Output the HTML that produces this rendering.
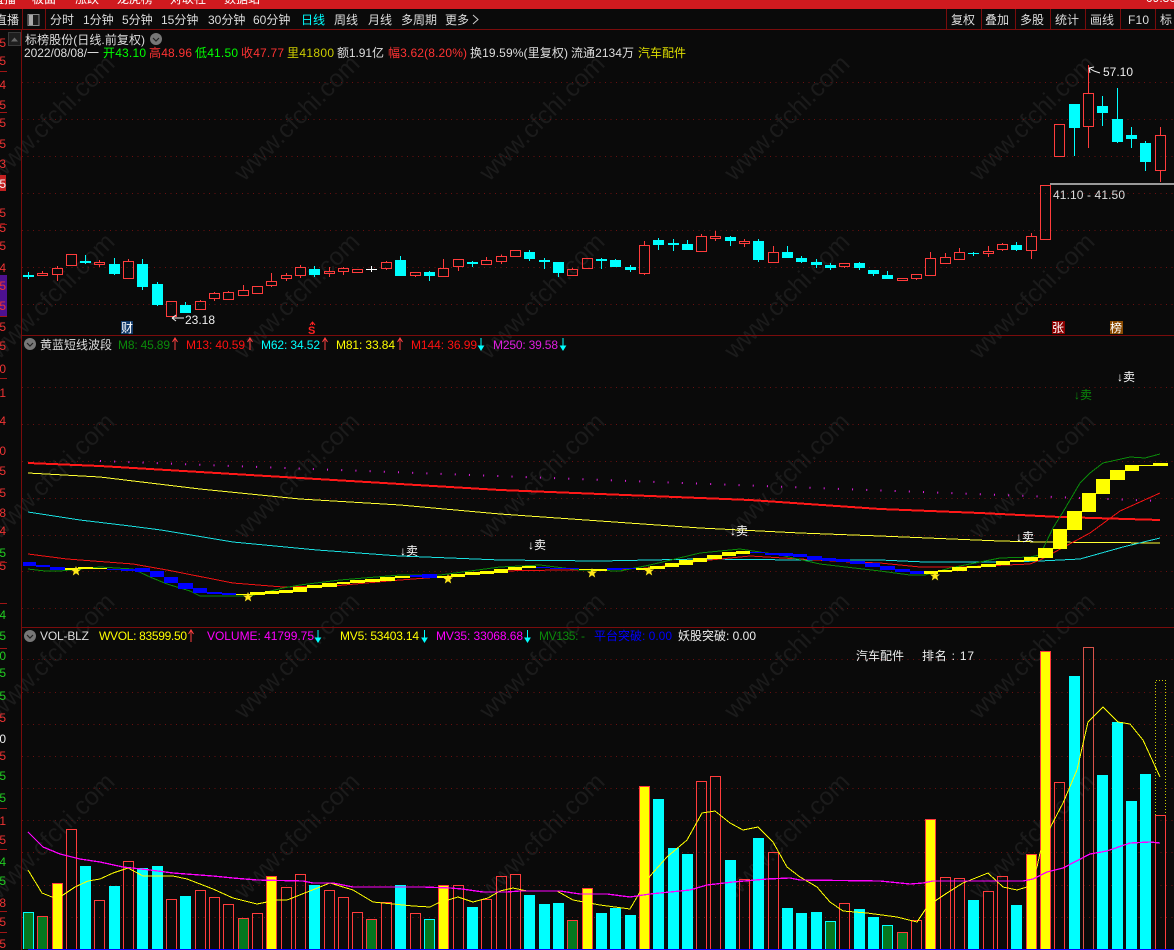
<!DOCTYPE html>
<html><head><meta charset="utf-8"><title>K线图</title>
<style>
html,body{margin:0;padding:0;background:#0a0a0a;width:1174px;height:950px;overflow:hidden}
svg{display:block;position:absolute;left:0;top:0}
text{font-family:"Liberation Sans","WenQuanYi Zen Hei","Noto Sans CJK SC",sans-serif;font-size:12px;fill:#ddd}
.wm text{font-size:25px;fill:#1b1b1b;text-anchor:middle;font-family:"Liberation Sans",sans-serif}
.ax text{text-anchor:end;fill:#e33}
.g{fill:#2c2}
.c{shape-rendering:crispEdges}
</style></head><body>
<svg width="1174" height="950" viewBox="0 0 1174 950" xmlns="http://www.w3.org/2000/svg">
<rect width="1174" height="950" fill="#0a0a0a"/>
<g class="wm">
<text transform="rotate(-45 52 118)" x="52" y="126">www.cfchi.com</text><text transform="rotate(-45 297 118)" x="297" y="126">www.cfchi.com</text><text transform="rotate(-45 542 118)" x="542" y="126">www.cfchi.com</text><text transform="rotate(-45 787 118)" x="787" y="126">www.cfchi.com</text><text transform="rotate(-45 1032 118)" x="1032" y="126">www.cfchi.com</text>
<text transform="rotate(-45 52 296)" x="52" y="304">www.cfchi.com</text><text transform="rotate(-45 297 296)" x="297" y="304">www.cfchi.com</text><text transform="rotate(-45 542 296)" x="542" y="304">www.cfchi.com</text><text transform="rotate(-45 787 296)" x="787" y="304">www.cfchi.com</text><text transform="rotate(-45 1032 296)" x="1032" y="304">www.cfchi.com</text>
<text transform="rotate(-45 52 476)" x="52" y="484">www.cfchi.com</text><text transform="rotate(-45 297 476)" x="297" y="484">www.cfchi.com</text><text transform="rotate(-45 542 476)" x="542" y="484">www.cfchi.com</text><text transform="rotate(-45 787 476)" x="787" y="484">www.cfchi.com</text><text transform="rotate(-45 1032 476)" x="1032" y="484">www.cfchi.com</text>
<text transform="rotate(-45 52 656)" x="52" y="664">www.cfchi.com</text><text transform="rotate(-45 297 656)" x="297" y="664">www.cfchi.com</text><text transform="rotate(-45 542 656)" x="542" y="664">www.cfchi.com</text><text transform="rotate(-45 787 656)" x="787" y="664">www.cfchi.com</text><text transform="rotate(-45 1032 656)" x="1032" y="664">www.cfchi.com</text>
<text transform="rotate(-45 52 836)" x="52" y="844">www.cfchi.com</text><text transform="rotate(-45 297 836)" x="297" y="844">www.cfchi.com</text><text transform="rotate(-45 542 836)" x="542" y="844">www.cfchi.com</text><text transform="rotate(-45 787 836)" x="787" y="844">www.cfchi.com</text><text transform="rotate(-45 1032 836)" x="1032" y="844">www.cfchi.com</text>
</g>

<!-- grid -->
<path class="c" fill="none" stroke="#6a1010" stroke-dasharray="1 4.5" d="M22 82.5H1174M22 119.5H1174M22 156.5H1174M22 193.5H1174M22 230.5H1174M22 267.5H1174M22 304.5H1174M22 387.5H1174M22 424.5H1174M22 461.5H1174M22 498.5H1174M22 535.5H1174M22 571.5H1174M22 608.5H1174M22 659.5H1174M22 692.5H1174M22 724.5H1174M22 756.5H1174M22 788.5H1174M22 820.5H1174M22 852.5H1174M22 885.5H1174M22 917.5H1174"/>

<!-- top bar -->
<rect x="0" y="0" width="1174" height="9" fill="#d01a1f"/>
<g>
<text x="-8" y="3" style="fill:#fff">直播</text><text x="32" y="3" style="fill:#fff">板面</text><text x="75" y="3" style="fill:#fff">涨跌</text><text x="117" y="3" style="fill:#fff">龙虎榜</text><text x="170" y="3" style="fill:#fff">对联社</text><text x="224" y="3" style="fill:#fff">数据站</text>
<text x="1146" y="2" style="fill:#fff">09:30</text>
</g>

<!-- toolbar -->
<path class="c" stroke="#7a0c0c" fill="none" d="M0 29.5H1174M22.5 9V29M45.5 9V29M946.5 9V29M981.5 9V29M1015.5 9V29M1050.5 9V29M1085.5 9V29M1120.5 9V29M1155.5 9V29M21.5 29V950M22 335.5H1174M22 627.5H1174"/>
<text x="-5" y="24" style="fill:#ddd">直播</text>
<rect x="28" y="14.5" width="11" height="11" fill="#1c1c1c" stroke="#888" class="c"/><rect x="29" y="15" width="4" height="10" fill="#aaa" class="c"/>
<g style="fill:#ccc">
<text x="50" y="24">分时</text>
<text x="83" y="24">1分钟</text>
<text x="122" y="24">5分钟</text>
<text x="161" y="24">15分钟</text>
<text x="208" y="24">30分钟</text>
<text x="253" y="24">60分钟</text>
<text x="301" y="24" style="fill:#0ff">日线</text>
<text x="334" y="24">周线</text>
<text x="368" y="24">月线</text>
<text x="401" y="24">多周期</text>
<text x="445" y="24">更多</text>
<text x="951" y="24">复权</text>
<text x="985" y="24">叠加</text>
<text x="1020" y="24">多股</text>
<text x="1055" y="24">统计</text>
<text x="1090" y="24">画线</text>
<text x="1128" y="24" textLength="21">F10</text>
<text x="1160" y="24">标</text>
</g>
<path d="M473 15l5 4.5-5 4.5" fill="none" stroke="#ccc"/>

<!-- left axis -->
<g class="ax">
<text x="6" y="47">5</text><text x="6" y="65">5</text><text x="6" y="89">4</text><text x="6" y="109">5</text><text x="6" y="127">5</text><text x="6" y="148">5</text><text x="6" y="168">3</text>
<rect x="0" y="175" width="6" height="16" fill="#c42020"/><text x="6" y="188" style="fill:#eee">5</text>
<text x="6" y="217">5</text><text x="6" y="232">5</text><text x="6" y="250">5</text><text x="6" y="272">4</text>
<rect x="0" y="275" width="7" height="41" fill="#4d1190"/><text x="6" y="290">5</text><text x="6" y="310">5</text>
<text x="6" y="331">5</text><text x="6" y="350">5</text><text x="6" y="373">0</text><text x="6" y="397">1</text><text x="6" y="425">4</text><text x="6" y="455">0</text><text x="6" y="475">5</text><text x="6" y="497">5</text><text x="6" y="517">8</text><text x="6" y="535">4</text>
<text x="6" y="557" style="fill:#2c2">5</text><text x="6" y="570">5</text>
<text x="6" y="619" style="fill:#2c2">4</text><text x="6" y="640" style="fill:#2c2">5</text><text x="6" y="660" style="fill:#2c2">0</text><text x="6" y="677" style="fill:#2c2">5</text><text x="6" y="700" style="fill:#2c2">5</text><text x="6" y="722">5</text><text x="6" y="743" style="fill:#eee">0</text><text x="6" y="760">5</text><text x="6" y="780" style="fill:#2c2">5</text>
<text x="6" y="802" style="fill:#2c2">5</text><text x="6" y="825">1</text><text x="6" y="844">5</text><text x="6" y="866" style="fill:#2c2">4</text><text x="6" y="885" style="fill:#2c2">5</text><text x="6" y="907">8</text><text x="6" y="926">5</text><text x="6" y="948">5</text>
</g>
<path class="c" stroke="#a01515" d="M0 71.5H7M0 112.5H7M0 224.5H7M0 316.5H7M0 378.5H7M0 562.5H7M0 603.5H7M0 648.5H7M0 808.5H7M0 849.5H7M0 911.5H7M0 932.5H7"/>
<rect x="8.5" y="32.5" width="12" height="13" fill="#1e1e1e" stroke="#3a3a3a" class="c"/><path d="M11 41.5l3.5-4 3.5 4z" fill="#666"/>

<!-- panel 1 header -->
<text x="25" y="44" textLength="120">标榜股份(日线.前复权)</text>
<circle cx="156" cy="39" r="6" fill="#777"/><path d="M153 38l3 3 3-3" fill="none" stroke="#222" stroke-width="1.2"/>
<text x="24" y="57" textLength="75" style="fill:#ddd">2022/08/08/一</text>
<text x="103" y="57" textLength="43" style="fill:#0f0">开43.10</text>
<text x="149" y="57" textLength="43" style="fill:#f33">高48.96</text>
<text x="195" y="57" textLength="43" style="fill:#0f0">低41.50</text>
<text x="241" y="57" textLength="43" style="fill:#f33">收47.77</text>
<text x="287" y="57" textLength="47" style="fill:#cc0">里41800</text>
<text x="337" y="57" textLength="47">额1.91亿</text>
<text x="388" y="57" textLength="79" style="fill:#f33">幅3.62(8.20%)</text>
<text x="470" y="57" textLength="98">换19.59%(里复权)</text>
<text x="571" y="57" textLength="63">流通2134万</text>
<text x="638" y="57" style="fill:#dd0">汽车配件</text>

<!-- candles -->
<g class="c">
<path fill="none" stroke="#ff3c3c" d="M37.5 273.5h10v2h-10zM42.5 271v2.5M52.5 268.5h10v6h-10zM57.5 266v2.5M57.5 274.5V281M66.5 254.5h10v11h-10zM94.5 262.5h10v2h-10zM99.5 260v2.5M99.5 264.5V267M123.5 261.5h10v17h-10zM128.5 259v2.5M166.5 301.5h10v15h-10zM195.5 301.5h10v8h-10zM200.5 300v1.5M209.5 293.5h10v5h-10zM214.5 292v1.5M214.5 298.5V301M223.5 292.5h10v7h-10zM228.5 291v1.5M238.5 290.5h10v5h-10zM243.5 285v5.5M252.5 286.5h10v7h-10zM266.5 281.5h10v4h-10zM271.5 273v8.5M271.5 285.5V287M281.5 275.5h10v3h-10zM286.5 273v2.5M286.5 278.5V281M295.5 267.5h10v8h-10zM300.5 265v2.5M300.5 275.5V278M324.5 271.5h10v2h-10zM329.5 267v4.5M329.5 273.5V277M338.5 268.5h10v3h-10zM343.5 267v1.5M343.5 271.5V275M352.5 269.5h10v3h-10zM381.5 262.5h10v6h-10zM386.5 261v1.5M386.5 268.5V270M410.5 272.5h10v3h-10zM415.5 275.5V277M438.5 268.5h10v8h-10zM443.5 259v9.5M453.5 259.5h10v7h-10zM458.5 266.5V271M481.5 260.5h10v4h-10zM486.5 257v3.5M496.5 256.5h10v5h-10zM501.5 254.5v2M501.5 261.5V264M510.5 250.5h10v6h-10zM567.5 269.5h10v6h-10zM572.5 268v1.5M582.5 258.5h10v10h-10zM639.5 245.5h10v28h-10zM644.5 241v4.5M644.5 273.5V275M696.5 236.5h10v15h-10zM701.5 234v2.5M710.5 236.5h10v2h-10zM715.5 231v5.5M715.5 238.5V241M739.5 241.5h10v2h-10zM744.5 239v2.5M744.5 243.5V247M768.5 252.5h10v10h-10zM773.5 246v6.5M839.5 263.5h10v3h-10zM844.5 266.5V268M897.5 278.5h10v2h-10zM911.5 274.5h10v4h-10zM916.5 278.5V280M925.5 258.5h10v17h-10zM930.5 252v6.5M940.5 257.5h10v6h-10zM945.5 253v4.5M954.5 252.5h10v7h-10zM959.5 248v4.5M983.5 251.5h10v2h-10zM988.5 246v5.5M988.5 253.5V257M997.5 244.5h10v5h-10zM1002.5 243v1.5M1002.5 249.5V251M1026.5 236.5h10v14h-10zM1031.5 233v3.5M1031.5 250.5V259M1040.5 185.5h10v54h-10zM1054.5 124.5h10v32h-10zM1083.5 93.5h10v33h-10zM1088.5 65v28.5M1088.5 126.5V148M1155.5 135.5h10v35h-10zM1160.5 127v8.5M1160.5 170.5V182"/>
<path fill="none" stroke="#0ff" d="M28.5 272V279M85.5 255V264M114.5 258V275M142.5 259V290M157.5 282V306M185.5 302V313M314.5 266V277M400.5 256V276M429.5 271V281M472.5 261V267M529.5 250V261M544.5 258V269M558.5 262V277M601.5 258V269M615.5 259V267M630.5 265V272M658.5 238V250M673.5 239V251M687.5 240V250M730.5 236V246M758.5 239V262M787.5 246V258M801.5 256V263M816.5 259V268M830.5 263V270M859.5 262V270M873.5 270V276M887.5 271V279M973.5 252V256M1016.5 242V251M1074.5 104V156M1102.5 96V126M1117.5 88V143M1131.5 127V148M1145.5 141V171"/>
<path fill="#0ff" d="M23 275h11v2h-11zM80 261h11v2h-11zM109 264h11v10h-11zM137 264h11v23h-11zM152 284h11v21h-11zM180 305h11v8h-11zM309 269h11v6h-11zM395 260h11v16h-11zM424 272h11v4h-11zM467 262h11v2h-11zM524 252h11v7h-11zM539 260h11v2h-11zM553 262h11v11h-11zM596 259h11v2h-11zM610 260h11v7h-11zM625 267h11v3h-11zM653 240h11v5h-11zM668 243h11v2h-11zM682 244h11v6h-11zM725 237h11v4h-11zM753 241h11v19h-11zM782 252h11v6h-11zM796 258h11v4h-11zM811 262h11v3h-11zM825 265h11v3h-11zM854 263h11v5h-11zM868 270h11v4h-11zM882 275h11v4h-11zM968 253h11v1h-11zM1011 245h11v5h-11zM1069 104h11v24h-11zM1097 106h11v7h-11zM1112 119h11v23h-11zM1126 135h11v4h-11zM1140 143h11v19h-11z"/>
<path fill="none" stroke="#fff" d="M366 269.5H377M371.5 266V272"/>
<rect x="1050" y="183" width="124" height="2" fill="#999"/>
</g>
<text x="1053" y="199" textLength="72">41.10 - 41.50</text>
<path d="M1100 73l-6-2-5-3M1089 68l1 5M1089 68l5-1" fill="none" stroke="#eee"/>
<text x="1103" y="76" textLength="30" style="fill:#eee">57.10</text>
<path d="M184 318H172M172 318l4-3M172 318l4 3" fill="none" stroke="#eee"/>
<text x="185" y="324" textLength="30" style="fill:#eee">23.18</text>
<rect x="121" y="321" width="12" height="13" fill="#123a6a"/><text x="121" y="332" style="fill:#fff">财</text>
<text x="308" y="334" style="fill:#f22;font-weight:bold;font-size:11px">S</text><path d="M312.5 322v3M310 325l2.5-3 2.500 3" stroke="#f22" fill="none"/>
<rect x="1052" y="321" width="13" height="13" fill="#8b0000"/><text x="1052" y="332" style="fill:#fff">张</text>
<rect x="1110" y="321" width="13" height="13" fill="#8a4a00"/><text x="1110" y="332" style="fill:#fff">榜</text>

<!-- panel 2 header -->
<circle cx="30" cy="344" r="6" fill="#777"/><path d="M27 343l3 3 3-3" fill="none" stroke="#222" stroke-width="1.2"/>
<text x="40" y="349" textLength="72">黄蓝短线波段</text>
<text x="118" y="349" textLength="52" style="fill:#0a8a0a">M8: 45.89</text>
<text x="186" y="349" textLength="59" style="fill:#f11">M13: 40.59</text>
<text x="261" y="349" textLength="59" style="fill:#0ff">M62: 34.52</text>
<text x="336" y="349" textLength="59" style="fill:#ff0">M81: 33.84</text>
<text x="411" y="349" textLength="66" style="fill:#f11">M144: 36.99</text>
<text x="493" y="349" textLength="65" style="fill:#e01fe0">M250: 39.58</text>
<path fill="none" stroke="#ff4040" d="M175 350V338M172.500 342l2.500-4 2.500 4M250 350V338M247.500 342l2.500-4 2.500 4M325 350V338M322.500 342l2.500-4 2.500 4M400 350V338M397.500 342l2.500-4 2.500 4"/>
<path fill="#0ff" stroke="#0ff" d="M481 338V346M563 338V346M478.500 346h5l-2.500 4zM560.500 346h5l-2.500 4z"/>

<!-- panel 2 indicator -->
<line x1="100" y1="461" x2="1160" y2="501" stroke="#e020e0" stroke-width="2" stroke-dasharray="1 13.200"/>
<g fill="none" class="c">
<polyline stroke="#ff1818" stroke-width="2" points="28,463 100,466 250,475 400,484 500,490 650,496 750,500 880,509 980,513 1060,517 1160,520"/>
<polyline stroke="#ffff33" points="28,473 100,477 200,489 300,499 400,505 500,514 600,521 700,528 800,533 880,536 1000,541 1040,542 1160,543"/>
<polyline stroke="#19dfe0" points="28,512 80,520 130,526 161,530 233,542 317,550 400,556 500,560 600,561 700,559 800,560 880,560 925,562 1000,562 1040,561 1080,559 1123,547 1160,538"/>
<polyline stroke="#f01212" points="28,554 67,559 133,564 167,570 233,583 283,587 333,586 400,580 440,577 500,571 560,570 600,570 650,568 700,561 750,556 800,559 850,562 880,563 920,567 960,567 1030,564 1040,560 1090,533 1120,511 1160,493"/>
<polyline stroke="#0a8a0a" points="28,569 45,571 60,571 100,567 133,569 150,577 167,584 190,591 200,596 220,596 250,596 283,588 300,585 340,580 400,575 440,575 500,567 540,565 580,570 620,571 650,565 700,553 740,549 780,555 820,564 880,571 910,575 925,575 950,568 1000,558 1030,557 1040,555 1053,528 1063,512 1080,483 1090,473 1103,463 1130,457 1145,458 1160,454"/>
</g>
<path class="c" fill="#0000ff" d="M23 562H36V566H23zM36 565H50V567H36zM50 567H65V570H50zM107 569H121V570H107zM121 569H135V571H121zM135 568H150V572H135zM150 571H164V577H150zM164 577H178V583H164zM178 583H193V589H178zM193 588H207V593H193zM207 592H222V594H207zM222 593H236V595H222zM410 575H422V577H410zM422 574H437V578H422zM536 567H550V568H536zM550 568H565V569H550zM565 568H579V569H565zM607 568H622V570H607zM622 568H636V569H622zM750 552H765V553H750zM765 553H779V555H765zM779 553H793V556H779zM793 554H807V557H793zM807 556H822V560H807zM822 558H836V561H822zM836 559H850V562H836zM850 561H865V564H850zM865 563H880V567H865zM880 566H895V570H880zM895 569H910V572H895zM910 571H924V574H910z"/>
<path class="c" fill="#ffff00" d="M65 568H78V570H65zM78 567H93V569H78zM93 568H107V569H93zM236 594H250V595H236zM250 592H265V595H250zM265 591H279V594H265zM279 590H293V593H279zM293 587H307V592H293zM307 585H322V588H307zM322 583H337V587H322zM337 582H350V584H337zM350 580H365V583H350zM365 579H380V582H365zM380 577H395V581H380zM395 576H410V578H395zM437 576H451V578H437zM451 574H465V577H451zM465 572H480V575H465zM480 571H494V574H480zM494 569H508V573H494zM508 567H522V570H508zM522 566H536V568H522zM579 569H593V570H579zM593 569H607V571H593zM636 568H650V570H636zM650 566H665V569H650zM665 563H679V567H665zM679 560H693V565H679zM693 558H707V562H693zM707 555H722V559H707zM722 552H736V556H722zM736 551H750V554H736zM924 571H938V574H924zM938 570H952V572H938zM952 567H967V571H952zM967 566H981V568H967zM981 564H996V567H981zM996 561H1010V565H996zM1010 560H1024V562H1010zM1024 557H1038V561H1024zM1038 548H1053V558H1038zM1053 529H1067V549H1053zM1067 511H1082V530H1067zM1082 493H1096V512H1082zM1096 479H1110V494H1096zM1110 470H1125V480H1110zM1125 465H1139V471H1125zM1139 465H1153V466H1139zM1153 463H1168V466H1153z"/>
<g fill="#ffe81a">
<polygon transform="translate(76 571)" points="0,-5 1.500,-1.500 5,-1.500 2.200,.8 3.200,4.500 0,2.300 -3.200,4.500 -2.200,.8 -5,-1.500 -1.500,-1.500"/>
<polygon transform="translate(248 597)" points="0,-5 1.500,-1.500 5,-1.500 2.200,.8 3.200,4.500 0,2.300 -3.200,4.500 -2.200,.8 -5,-1.500 -1.500,-1.500"/>
<polygon transform="translate(448 579)" points="0,-5 1.500,-1.500 5,-1.500 2.200,.8 3.200,4.500 0,2.300 -3.200,4.500 -2.200,.8 -5,-1.500 -1.500,-1.500"/>
<polygon transform="translate(592 573)" points="0,-5 1.500,-1.500 5,-1.500 2.200,.8 3.200,4.500 0,2.300 -3.200,4.500 -2.200,.8 -5,-1.500 -1.500,-1.500"/>
<polygon transform="translate(649 571)" points="0,-5 1.500,-1.500 5,-1.500 2.200,.8 3.200,4.500 0,2.300 -3.200,4.500 -2.200,.8 -5,-1.500 -1.500,-1.500"/>
<polygon transform="translate(935 576)" points="0,-5 1.500,-1.500 5,-1.500 2.200,.8 3.200,4.500 0,2.300 -3.200,4.500 -2.200,.8 -5,-1.500 -1.500,-1.500"/>
</g>
<text x="400" y="555" style="fill:#fff">↓卖</text>
<text x="528" y="549" style="fill:#fff">↓卖</text>
<text x="730" y="535" style="fill:#fff">↓卖</text>
<text x="1016" y="541" style="fill:#fff">↓卖</text>
<text x="1074" y="399" style="fill:#0a8a0a">↓卖</text>
<text x="1117" y="381" style="fill:#fff">↓卖</text>

<!-- panel 3 header -->
<circle cx="30" cy="636" r="6" fill="#777"/><path d="M27 635l3 3 3-3" fill="none" stroke="#222" stroke-width="1.2"/>
<text x="40" y="640" textLength="49" style="fill:#ddd">VOL-BLZ</text>
<text x="99" y="640" textLength="88" style="fill:#ff0">WVOL: 83599.50</text>
<text x="207" y="640" textLength="107" style="fill:#f0f">VOLUME: 41799.75</text>
<text x="340" y="640" textLength="79" style="fill:#ff0">MV5: 53403.14</text>
<text x="436" y="640" textLength="87" style="fill:#f0f">MV35: 33068.68</text>
<text x="539" y="640" textLength="46" style="fill:#0a8a0a">MV135: -</text>
<text x="594" y="640" textLength="78" style="fill:#0000ff">平台突破: 0.00</text>
<text x="678" y="640" textLength="78" style="fill:#eee">妖股突破: 0.00</text>
<path fill="none" stroke="#ff4040" d="M191 642V630M188.500 634l2.500-4 2.500 4"/>
<path fill="#0ff" stroke="#0ff" d="M318 630V638M315.500 638h5l-2.500 4zM424.500 630V638M422 638h5l-2.500 4zM527.500 630V638M525 638h5l-2.500 4z"/>
<text x="856" y="660" style="fill:#eee">汽车配件</text>
<text x="922" y="660" textLength="52" style="fill:#eee">排名 : 17</text>

<!-- volume bars -->
<g class="c">
<path fill="#0ff" d="M80 866h11v83h-11zM109 886h11v63h-11zM137 868h11v81h-11zM152 866h11v83h-11zM180 896h11v53h-11zM309 885h11v64h-11zM395 885h11v64h-11zM467 907h11v42h-11zM524 895h11v54h-11zM539 904h11v45h-11zM553 903h11v46h-11zM596 913h11v36h-11zM610 908h11v41h-11zM625 915h11v34h-11zM653 799h11v150h-11zM668 848h11v101h-11zM682 854h11v95h-11zM725 860h11v89h-11zM753 838h11v111h-11zM782 908h11v41h-11zM796 913h11v36h-11zM811 912h11v37h-11zM854 909h11v40h-11zM868 917h11v32h-11zM968 900h11v49h-11zM1011 905h11v44h-11zM1069 676h11v273h-11zM1097 775h11v174h-11zM1112 722h11v227h-11zM1126 801h11v148h-11zM1140 774h11v175h-11z"/>
<path fill="#05771f" d="M23 912h11v37h-11zM37 916h11v33h-11zM238 918h11v31h-11zM366 919h11v30h-11zM424 919h11v30h-11zM567 920h11v29h-11zM825 921h11v28h-11zM882 925h11v24h-11zM897 932h11v17h-11z"/>
<path fill="#ffff00" d="M52 883h11v66h-11zM266 876h11v73h-11zM438 885h11v64h-11zM582 888h11v61h-11zM639 786h11v163h-11zM925 819h11v130h-11zM1026 854h11v95h-11zM1040 651h11v298h-11z"/>
<path fill="none" stroke="#ff3c3c" d="M66.500 949V829.500h10V949M94.500 949V900.500h10V949M123.500 949V861.500h10V949M166.500 949V899.500h10V949M195.500 949V890.500h10V949M209.500 949V897.500h10V949M223.500 949V904.500h10V949M252.500 949V913.500h10V949M281.500 949V887.500h10V949M295.500 949V874.500h10V949M324.500 949V890.500h10V949M338.500 949V897.500h10V949M352.500 949V912.500h10V949M381.500 949V902.500h10V949M410.500 949V913.500h10V949M453.500 949V885.500h10V949M481.500 949V899.500h10V949M496.500 949V876.500h10V949M510.500 949V874.500h10V949M696.500 949V781.500h10V949M710.500 949V776.500h10V949M739.500 949V879.500h10V949M768.500 949V852.500h10V949M839.500 949V903.500h10V949M911.500 949V920.500h10V949M940.500 949V877.500h10V949M954.500 949V878.500h10V949M983.500 949V891.500h10V949M997.500 949V876.500h10V949M1054.500 949V782.500h10V949M1155.500 949V815.500h10V949M52.500 949V883.500h10V949M266.500 949V876.500h10V949M438.500 949V885.500h10V949M582.500 949V888.500h10V949M639.500 949V786.500h10V949M925.500 949V819.500h10V949M1026.500 949V854.500h10V949M1040.500 949V651.500h10V949M37.500 949V916.500h10V949M238.500 949V918.500h10V949M366.500 949V919.500h10V949M567.500 949V920.500h10V949M897.500 949V932.500h10V949"/>
<path fill="none" stroke="#d9534a" d="M1083.500 949V647.500h10V949"/>
<path fill="none" stroke="#0ff" d="M23.500 949V912.500h10V949M424.500 949V919.500h10V949M825.500 949V921.500h10V949M882.500 949V925.500h10V949"/>
<path fill="none" stroke="#cc0" stroke-dasharray="1 2" d="M1155.500 815V680.500h10V815"/>
<path stroke="#0000ff" d="M28 949.500H1174"/>
<polyline fill="none" stroke="#ff0" points="28,870 42,893 52,897 60,897 75,887 88,881 100,879 113,873 128,868 143,876 173,876 187,879 213,889 233,898 257,904 277,900 287,900 330,883 353,890 373,902 393,904 413,906 430,907 438,903 458,897 473,902 488,898 500,891 513,888 527,891 557,891 573,900 600,905 630,909 640,892 650,876 667,857 687,840 702,813 715,811 730,823 743,830 758,827 773,842 787,867 800,877 817,887 830,902 843,911 867,913 897,917 917,922 925,910 935,901 947,893 963,883 988,873 1003,887 1017,890 1027,887 1037,867 1040,853 1050,828 1063,803 1077,770 1088,722 1103,707 1118,722 1130,724 1143,740 1160,777"/>
<polyline fill="none" stroke="#f0f" stroke-width="1.300" points="28,832 43,847 60,854 80,859 100,862 123,867 150,870 173,873 213,876 233,878 257,880 303,881 313,883 333,883 353,887 400,887 423,887 450,888 462,889 483,892 507,892 520,891 560,891 580,894 607,894 630,897 650,894 670,892 690,890 707,885 733,882 767,879 790,878 800,880 880,881 910,884 923,883 933,881 1023,881 1033,879 1047,872 1063,868 1090,854 1107,851 1130,843 1150,842 1160,843"/>
</g>
</svg>
</body></html>
